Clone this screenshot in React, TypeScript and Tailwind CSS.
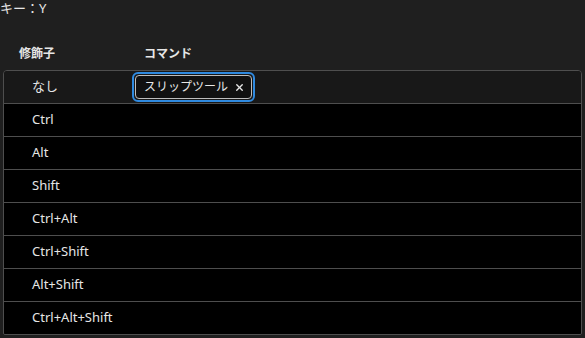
import { X } from "lucide-react";

const rows = ["なし", "Ctrl", "Alt", "Shift", "Ctrl+Alt", "Ctrl+Shift", "Alt+Shift", "Ctrl+Alt+Shift"];

const font = { fontFamily: '"Noto Sans", "Noto Sans CJK JP", sans-serif' };

export default function App() {
  return (
    <div className="w-[585px] h-[338px] bg-[#1f1f1f] text-[#e6e6e6] text-[13px] overflow-hidden" style={font}>
      <div className="h-[20px] leading-[16px]">キー：Y</div>
      <div className="flex h-[50px] items-center pt-[18px] font-bold text-[12px]">
        <div className="w-[144px] pl-[19px]">修飾子</div>
        <div>コマンド</div>
      </div>
      <div className="mx-[3px] border border-[#4e4e4e] rounded-t-[4px] rounded-b-[2px] overflow-hidden">
        {rows.map((r, i) => (
          <div
            key={r}
            className={
              "flex items-center " +
              (i === 0 ? "h-[32px] bg-[#181818]" : "h-[33px] bg-black border-t border-[#4e4e4e]")
            }
          >
            <div className="w-[128px] pl-[28px]">{r}</div>
            {i === 0 && (
              <div className="rounded-[6px] border-2 border-[#2f8ae0] p-[1px]">
                <div className="flex items-center gap-[6px] h-[24px] pl-[8px] pr-[6px] rounded-[4px] border border-[#bdbdbd] bg-[#111] text-[12px]">
                  <span>スリップツール</span>
                  <X className="w-[11px] h-[11px]" strokeWidth={3} />
                </div>
              </div>
            )}
          </div>
        ))}
      </div>
    </div>
  );
}
